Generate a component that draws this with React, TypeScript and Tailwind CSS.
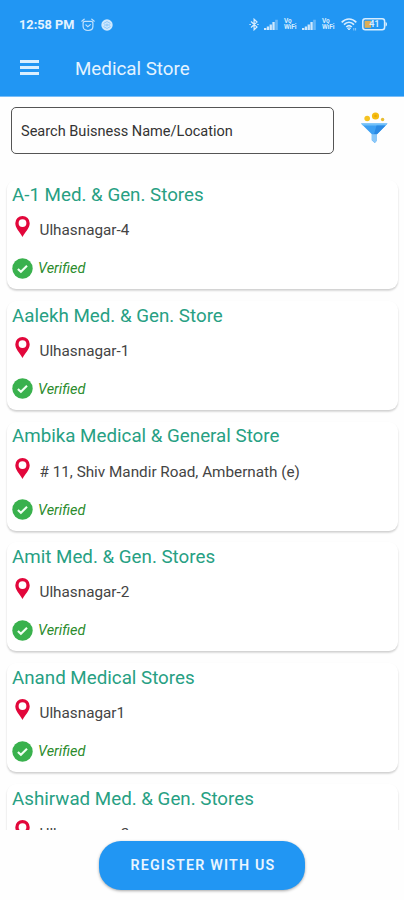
import React from "react";

type Store = { name: string; address: string };

const stores: Store[] = [
  { name: "A-1 Med. & Gen. Stores", address: "Ulhasnagar-4" },
  { name: "Aalekh Med. & Gen. Store", address: "Ulhasnagar-1" },
  { name: "Ambika Medical & General Store", address: "# 11, Shiv Mandir Road, Ambernath (e)" },
  { name: "Amit Med. & Gen. Stores", address: "Ulhasnagar-2" },
  { name: "Anand Medical Stores", address: "Ulhasnagar1" },
  { name: "Ashirwad Med. & Gen. Stores", address: "Ulhasnagar-2" },
];

function AlarmIcon() {
  return (
    <svg width="14" height="14" viewBox="0 0 14 14" fill="none" stroke="#c4e2fc" strokeWidth="1.2" strokeLinecap="round">
      <path d="M4 3.400h6c1.300 0 1.900.7 1.900 1.900v3.300c0 2.200-2 3.900-4.900 3.900s-4.900-1.700-4.900-3.900V5.300c0-1.200.6-1.900 1.900-1.900Z" />
      <path d="M.8 3.200 3.200 1.200M13.200 3.200 10.800 1.200M4.900 6.900 6.800 8.700 9.400 6.600" />
    </svg>
  );
}

function GlobeIcon() {
  return (
    <svg width="12" height="12" viewBox="0 0 12 12" fill="none">
      <circle cx="6" cy="6" r="5.700" fill="#cfe8fd" />
      <path d="M2.500 4.500 6 2.500l3.500 2M2.500 7.500l3.500 2 3.500-2M3 6h6M6 4.500v3" stroke="#84c3f9" strokeWidth=".9" />
    </svg>
  );
}

function BluetoothIcon() {
  return (
    <svg width="10" height="13" viewBox="0 0 10 13" fill="none" stroke="#d8edfe" strokeWidth="1.200">
      <path d="m2 3.500 6 5.500-2.900 2.800V1.200L8 4 2 9.500M.4 6.500h1.400M8.200 6.500h1.400" />
    </svg>
  );
}

function SignalIcon() {
  return (
    <svg width="15" height="11" viewBox="0 0 15 11" fill="#cfe8fd">
      <path d="M0 9h2.300v2H0zM2.800 7.500h2.300V11H2.800zM5.600 5.500h2.300V11H5.600zM8.400 3h2.300v8H8.400z" />
      <path d="M11.200 .8h2.600V11h-2.600z" opacity=".4" />
    </svg>
  );
}

function VoWifi() {
  return (
    <div className="flex w-[14px] flex-col items-start text-[6.5px] leading-[7px] font-bold tracking-[-0.1px] text-[#d5ecfe]">
      <span>Vo</span>
      <span className="-mt-px">WiFi</span>
    </div>
  );
}

function WifiIcon() {
  return (
    <svg width="17" height="13" viewBox="0 0 17 13" fill="none" stroke="#d8edfe" strokeWidth="1.700">
      <path d="M.7 4.300C5-.1 11-.1 15.300 4.300M3 6.700c3-3 7-3 10 0M5.300 9c1.700-1.700 3.700-1.700 5.400 0" />
      <path d="m8 12 1.500-2h-3z" strokeWidth="1" />
      <path d="M12.800 10v2.500M14.600 10v2.500" strokeWidth="1" opacity=".6" />
    </svg>
  );
}

function BatteryIcon() {
  return (
    <svg width="26" height="13" viewBox="0 0 26 13" fill="none">
      <rect x=".8" y=".8" width="21.800" height="11" rx="2.500" stroke="#d8edfe" strokeWidth="1.500" />
      <path d="M23.500 4c2 .2 2 4.400 0 4.600z" fill="#d8edfe" />
      <rect x="2.600" y="2.800" width="6.500" height="7" fill="#dcae57" />
      <text x="7.500" y="9.300" fontSize="8.500" fontWeight="700" fontFamily="Roboto, sans-serif" fill="#d8edfe">41</text>
    </svg>
  );
}

function FunnelIcon() {
  return (
    <svg width="28" height="32" viewBox="0 0 28 32">
      <circle cx="7.200" cy="6.500" r="2.800" fill="#f5c322" />
      <circle cx="15.500" cy="4" r="3.600" fill="#f5bd13" />
      <circle cx="15.500" cy="4" r="1.300" fill="#e9a908" />
      <circle cx="22.600" cy="7.500" r="1.700" fill="#e8bd32" />
      <path d="M1 11.500h26.500L17 22.200v6.300L14.800 31l-3-2.700v-6.100z" fill="#3da0f3" />
      <path d="M1 11.500h26.500l-1.800 2H2.900z" fill="#72c1fa" />
      <path d="M16.500 13.500h9.200L17 22.200h-3z" fill="#2b8ae4" />
      <path d="M11.800 22.200H17v6.300L14.800 31l-3-2.700z" fill="#8cc8f8" />
    </svg>
  );
}

function PinIcon() {
  return (
    <svg width="15" height="21" viewBox="0 0 15 21" className="shrink-0">
      <path
        fillRule="evenodd"
        fill="#e2073b"
        d="M7.500 0A7.200 7.200 0 0 0 .3 7.200C.3 12 4.600 15.500 7.500 21c2.900-5.500 7.200-9 7.200-13.800A7.200 7.200 0 0 0 7.500 0Zm0 3.200a3.900 3.900 0 1 1 0 7.800 3.900 3.900 0 0 1 0-7.800Z"
      />
    </svg>
  );
}

function CheckIcon() {
  return (
    <svg width="21" height="21" viewBox="0 0 21 21" className="shrink-0">
      <circle cx="10.500" cy="10.500" r="10.200" fill="#39b14d" />
      <path d="m5.900 10.900 3 2.900 6.100-6" fill="none" stroke="#f0fff2" strokeWidth="2.100" />
    </svg>
  );
}

function StoreCard({ name, address }: Store) {
  return (
    <article className="h-[109px] shrink-0 rounded-[9px] bg-white px-[5px] shadow-[0_2px_2px_0px_rgba(0,0,0,0.12),0_1px_2px_0px_rgba(0,0,0,0.08)]">
      <h2 className="flex h-[29px] items-center pt-px text-[18.75px] font-normal whitespace-nowrap text-[#27a083]">{name}</h2>
      <div className="flex h-[40px] items-center pl-[3px]">
        <div className="-mt-[5px]"><PinIcon /></div>
        <span className="pt-[3px] pl-[9.5px] text-[15.28px] whitespace-nowrap text-[#444]">{address}</span>
      </div>
      <div className="flex h-[38px] items-center">
        <CheckIcon />
        <span className="pt-[2px] pl-[5px] text-[14.5px] italic text-[#2c8c2d]">Verified</span>
      </div>
    </article>
  );
}

export default function App() {
  return (
    <div className="flex h-[900px] w-[404px] flex-col overflow-hidden bg-[#fefefe] font-[Roboto,sans-serif]">
      <header className="h-[97px] shrink-0 border-b border-[#79bdf7] bg-[#2196f3]">
        <div className="flex h-[48px] items-center pt-px pl-[19px]">
          <span className="w-[62px] pt-px text-[12.75px] font-bold whitespace-nowrap text-[#e4f3ff]">12:58 PM</span>
          <AlarmIcon />
          <span className="ml-[6px]"><GlobeIcon /></span>
          <div className="ml-auto flex items-center pr-[16px]">
            <BluetoothIcon />
            <span className="ml-[5px]"><SignalIcon /></span>
            <span className="ml-[5px]"><VoWifi /></span>
            <span className="ml-[4px]"><SignalIcon /></span>
            <span className="ml-[5px]"><VoWifi /></span>
            <span className="ml-[5px]"><WifiIcon /></span>
            <span className="ml-[4px]"><BatteryIcon /></span>
          </div>
        </div>
        <div className="flex h-[40px] items-center pl-[20px]">
          <button aria-label="Menu" className="-mt-[2px] flex w-[19px] flex-col gap-[3px]">
            <span className="h-[3px] bg-[#d9eefe]" />
            <span className="h-[3px] bg-[#d9eefe]" />
            <span className="h-[3px] bg-[#d9eefe]" />
          </button>
          <h1 className="pt-[2px] pl-[36px] text-[18.75px] font-normal text-[#e4f3ff]">Medical Store</h1>
        </div>
      </header>

      <div className="flex h-[83px] shrink-0 items-start pt-[10px] pl-[11px]">
        <input
          aria-label="Search"
          placeholder="Search Buisness Name/Location"
          className="h-[47px] w-[323px] rounded-[5px] border border-[#555] px-[9px] pt-[2px] text-[14.55px] placeholder:text-[#333]"
        />
        <span className="mt-[5px] ml-[26px]"><FunnelIcon /></span>
      </div>

      <main className="flex h-[650px] shrink-0 flex-col gap-[11.75px] overflow-hidden px-[7px] pr-[6px]">
        {stores.map((store) => (
          <StoreCard key={store.name} {...store} />
        ))}
      </main>

      <footer className="flex justify-center pt-[11px]">
        <button className="h-[49px] w-[206px] rounded-[22px] bg-[#2196f3] pl-[2px] text-[14.25px] font-semibold tracking-[1.2px] text-[#e9f5ff] shadow-[0_1px_3px_rgba(0,0,0,0.35)]">
          REGISTER WITH US
        </button>
      </footer>
    </div>
  );
}
